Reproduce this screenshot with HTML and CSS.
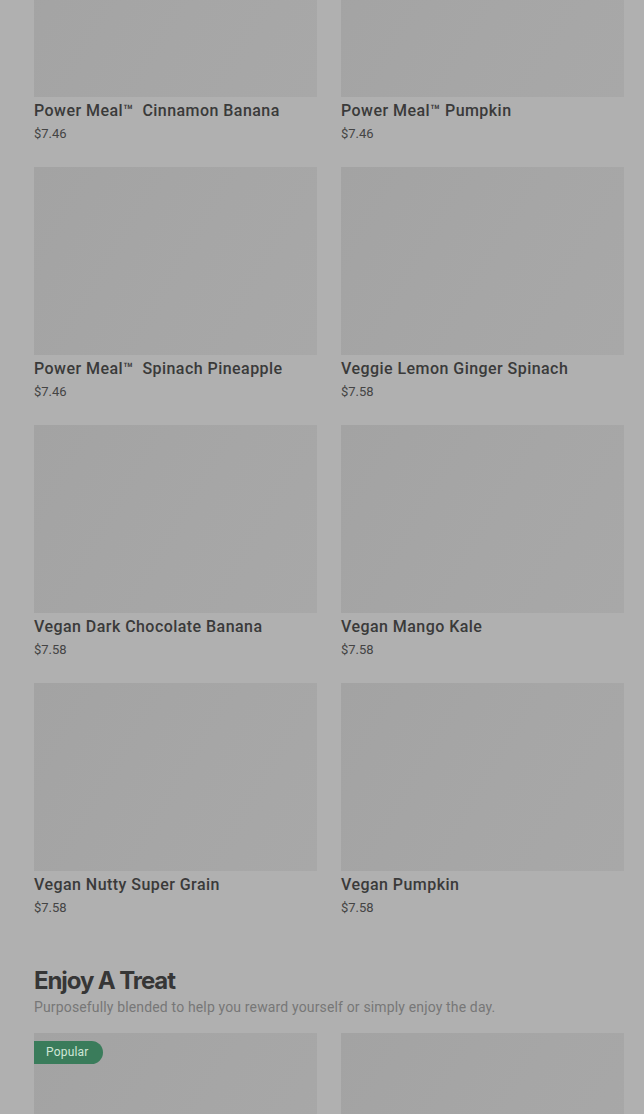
FILE: index.html
```html
<!DOCTYPE html>
<html>
<head>
<meta charset="utf-8">
<link rel="stylesheet" href="styles.css">
</head>
<body>
<div class="page">
  <div class="grid">
    <div class="card"><div class="img"></div><div class="title">Power Meal™&nbsp; Cinnamon Banana</div><div class="price">$7.46</div></div>
    <div class="card"><div class="img"></div><div class="title">Power Meal™ Pumpkin</div><div class="price">$7.46</div></div>
    <div class="card"><div class="img"></div><div class="title">Power Meal™&nbsp; Spinach Pineapple</div><div class="price">$7.46</div></div>
    <div class="card"><div class="img"></div><div class="title">Veggie Lemon Ginger Spinach</div><div class="price">$7.58</div></div>
    <div class="card"><div class="img"></div><div class="title">Vegan Dark Chocolate Banana</div><div class="price">$7.58</div></div>
    <div class="card"><div class="img"></div><div class="title">Vegan Mango Kale</div><div class="price">$7.58</div></div>
    <div class="card"><div class="img"></div><div class="title">Vegan Nutty Super Grain</div><div class="price">$7.58</div></div>
    <div class="card"><div class="img"></div><div class="title">Vegan Pumpkin</div><div class="price">$7.58</div></div>
  </div>
  <h2 class="heading">Enjoy A Treat</h2>
  <p class="sub">Purposefully blended to help you reward yourself or simply enjoy the day.</p>
  <div class="grid">
    <div class="card"><div class="img"><span class="badge">Popular</span></div></div>
    <div class="card"><div class="img"></div></div>
  </div>
</div>
</body>
</html>
```
FILE: styles.css
```css
html, body {
  margin: 0;
  padding: 0;
  background: #b0b0b0;
  overflow: hidden;
}
.page {
  margin-top: -91px;
  padding: 0 20px 0 34px;
  font-family: Roboto, "Liberation Sans", sans-serif;
}
.grid {
  display: grid;
  grid-template-columns: 283px 283px;
  column-gap: 24px;
  row-gap: 24px;
}
.img {
  position: relative;
  height: 188px;
  background: linear-gradient(120deg, #a3a3a3 0%, #a6a6a6 55%, #a8a8a8 100%);
}
.title {
  margin-top: 4px;
  font-size: 16px;
  line-height: 20px;
  font-weight: 500;
  letter-spacing: 0.45px;
  color: #3a3a3a;
  white-space: nowrap;
}
.price {
  margin-top: 4px;
  font-size: 13px;
  line-height: 18px;
  color: #444;
}
.heading {
  margin: 49px 0 0;
  font-family: Inter, "Liberation Sans", sans-serif;
  font-size: 24px;
  line-height: 30px;
  font-weight: 700;
  letter-spacing: -1.1px;
  color: #363636;
}
.sub {
  margin: 2px 0 17px;
  font-size: 14px;
  line-height: 18px;
  letter-spacing: 0.15px;
  color: #777;
}
.badge {
  position: absolute;
  top: 8px;
  left: 0;
  height: 23px;
  line-height: 23px;
  padding: 0 14px 0 12px;
  background: #3a7c5b;
  color: #cfe6d7;
  font-size: 12px;
  letter-spacing: 0.2px;
  border-radius: 0 12px 12px 0;
}
```
